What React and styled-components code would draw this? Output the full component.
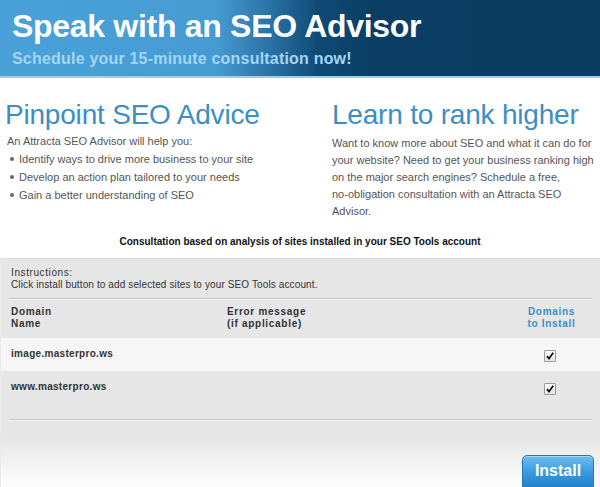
import React from "react";
import styled, { createGlobalStyle } from "styled-components";

const GlobalStyle = createGlobalStyle`
  html, body {
    margin: 0;
    padding: 0;
    background: #fff;
    font-family: "Liberation Sans", Arial, sans-serif;
  }
`;

const Page = styled.div`
  width: 600px;
  height: 487px;
  overflow: hidden;
  display: flex;
  flex-direction: column;
`;

const Banner = styled.div`
  height: 78px;
  box-sizing: border-box;
  padding: 7px 0 0 12px;
  background: linear-gradient(
    90deg,
    #4aa1d9 0%,
    #469bd3 36%,
    #2a72a6 45%,
    #0f4a75 53%,
    #0a3e64 62%,
    #0a3d62 100%
  );
  border-bottom: 2px solid #93d1ee;
`;

const Title = styled.h1`
  margin: 0;
  font-size: 32px;
  line-height: 38px;
  font-weight: bold;
  color: #fff;
  letter-spacing: -0.3px;
`;

const Subtitle = styled.div`
  font-size: 16px;
  line-height: 20px;
  font-weight: bold;
  color: #a4d6f3;
  margin-top: 4px;
  letter-spacing: 0.2px;
`;

const Columns = styled.div`
  display: grid;
  grid-template-columns: 327px 1fr;
  padding: 20px 0 0 5px;
`;

const Column = styled.div`
  min-width: 0;
`;

const Heading = styled.h2`
  margin: 0;
  font-size: 28px;
  line-height: 34px;
  font-weight: normal;
  color: #3b8ec6;
  letter-spacing: -0.2px;
`;

const Body = styled.div`
  font-size: 11px;
  line-height: ${(p) => p.$lh || 18}px;
  color: #555;
  margin-top: ${(p) => p.$top || 0}px;
  padding-left: ${(p) => p.$pad || 0}px;
`;

const List = styled.ul`
  margin: 0;
  padding: 0 0 0 12px;
  list-style: none;
`;

const Item = styled.li`
  position: relative;
  &::before {
    content: "";
    position: absolute;
    left: -9px;
    top: 7px;
    width: 4px;
    height: 4px;
    border-radius: 50%;
    background: #666;
  }
`;

const Note = styled.div`
  text-align: center;
  font-size: 10px;
  font-weight: bold;
  color: #111;
  margin-top: 16px;
`;

const Panel = styled.div`
  flex: 1;
  margin-top: 11px;
  border-top: 1px solid #dcdcdc;
  border-left: 1px solid #e9e9e9;
  background: linear-gradient(180deg, #e6e6e6 0%, #e6e6e6 78%, #fdfdfd 100%);
  display: flex;
  flex-direction: column;
`;

const Instructions = styled.div`
  padding: 8px 10px 0;
  font-size: 10px;
  line-height: 12px;
  color: #333;
  letter-spacing: 0.12px;
`;

const Label = styled.div`
  letter-spacing: 0.6px;
`;

const Divider = styled.div`
  margin: ${(p) => p.$top}px 8px 0;
  height: 1px;
  background: #c6c6c6;
  border-bottom: 1px solid #f4f4f4;
`;

const Row = styled.div`
  display: grid;
  grid-template-columns: 216px 286px 1fr;
  padding: ${(p) => (p.$head ? "6px 10px 8px" : "0 10px")};
  height: ${(p) => (p.$head ? "auto" : "33px")};
  align-items: start;
  background: ${(p) => p.$bg || "transparent"};
  font-size: 10px;
  line-height: 12px;
  font-weight: bold;
  color: #333;
  letter-spacing: ${(p) => (p.$head ? "0.7px" : "0.3px")};
`;

const Cell = styled.div`
  padding-top: ${(p) => (p.$head ? 0 : 10)}px;
  text-align: ${(p) => (p.$center ? "center" : "left")};
  color: ${(p) => (p.$blue ? "#3a8fc8" : "inherit")};
`;

const CheckBox = styled.span`
  display: inline-block;
  width: 10px;
  height: 10px;
  margin-top: 2px;
  margin-right: 3px;
  border: 1px solid #9a9a9a;
  border-radius: 1px;
  background: linear-gradient(180deg, #ffffff, #e4e4e4);
  position: relative;
  svg {
    position: absolute;
    left: 0;
    top: 0;
  }
`;

const Footer = styled.div`
  flex: 1;
  display: flex;
  justify-content: flex-end;
  align-items: flex-end;
  padding-right: 6px;
`;

const InstallButton = styled.button`
  width: 72px;
  height: 36px;
  margin-bottom: -4px;
  border: 1px solid #1f79b8;
  border-radius: 5px;
  background: linear-gradient(180deg, #6cc0ef 0%, #3b9ddf 45%, #1c7ec6 100%);
  color: #fff;
  font-family: "Liberation Sans", Arial, sans-serif;
  font-size: 16px;
  font-weight: bold;
  padding: 0 0 4px;
  box-shadow: inset 0 1px 0 rgba(255, 255, 255, 0.4);
`;

const Check = () => (
  <CheckBox>
    <svg width="10" height="10" viewBox="0 0 10 10">
      <path d="M2 5.2 L4 7.6 L8.2 1.8" fill="none" stroke="#111" strokeWidth="1.8" />
    </svg>
  </CheckBox>
);

const sites = ["image.masterpro.ws", "www.masterpro.ws"];

export default function App() {
  return (
    <Page>
      <GlobalStyle />
      <Banner>
        <Title>Speak with an SEO Advisor</Title>
        <Subtitle>Schedule your 15-minute consultation now!</Subtitle>
      </Banner>

      <Columns>
        <Column>
          <Heading>Pinpoint SEO Advice</Heading>
          <Body $pad={2}>
            An Attracta SEO Advisor will help you:
            <List>
              <Item>Identify ways to drive more business to your site</Item>
              <Item>Develop an action plan tailored to your needs</Item>
              <Item>Gain a better understanding of SEO</Item>
            </List>
          </Body>
        </Column>
        <Column>
          <Heading>Learn to rank higher</Heading>
          <Body $lh={17} $top={3}>
            Want to know more about SEO and what it can do for your website?
            Need to get your business ranking high on the major search engines?
            Schedule a free, <br />
            no-obligation consultation with an Attracta SEO Advisor.
          </Body>
        </Column>
      </Columns>

      <Note>
        Consultation based on analysis of sites installed in your SEO Tools
        account
      </Note>

      <Panel>
        <Instructions>
          <Label>Instructions:</Label>
          Click install button to add selected sites to your SEO Tools account.
        </Instructions>
        <Divider $top={7} />
        <Row $head>
          <Cell $head>
            Domain
            <br />
            Name
          </Cell>
          <Cell $head>
            Error message
            <br />
            (if applicable)
          </Cell>
          <Cell $head $center $blue>
            Domains
            <br />
            to Install
          </Cell>
        </Row>
        {sites.map((site, idx) => (
          <Row key={site} $bg={idx % 2 === 0 ? "#f6f6f6" : "#e6e6e6"}>
            <Cell>{site}</Cell>
            <Cell></Cell>
            <Cell $center>
              <Check />
            </Cell>
          </Row>
        ))}
        <Divider $top={15} />
        <Footer>
          <InstallButton>Install</InstallButton>
        </Footer>
      </Panel>
    </Page>
  );
}
